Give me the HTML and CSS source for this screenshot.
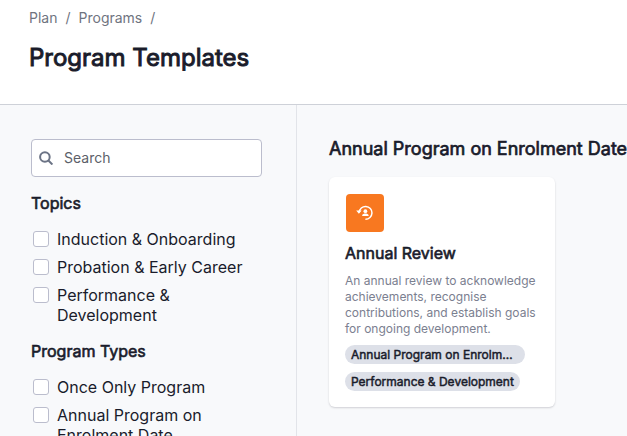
FILE: index.html
```html
<!DOCTYPE html>
<html lang="en">
<head>
<meta charset="utf-8">
<meta name="viewport" content="width=device-width, initial-scale=1">
<title>Program Templates</title>
<link rel="stylesheet" href="styles.css">
</head>
<body>
<header class="page-header">
  <nav class="breadcrumbs" aria-label="Breadcrumb">
    <a href="#">Plan</a><span>/</span><a href="#">Programs</a><span>/</span>
  </nav>
  <h1 class="page-title">Program Templates</h1>
</header>
<div class="layout">
  <aside class="sidebar">
    <label class="search">
      <svg class="search-icon" viewBox="0 0 14 14" aria-hidden="true"><circle cx="5.9" cy="6" r="4.8"/><path d="M9.4 9.5L13.4 13.5"/></svg>
      <input class="search-input" type="search" placeholder="Search" aria-label="Search">
    </label>
    <section class="filter">
      <h2 class="filter-title">Topics</h2>
      <label class="option"><input type="checkbox"><span>Induction &amp; Onboarding</span></label>
      <label class="option"><input type="checkbox"><span>Probation &amp; Early Career</span></label>
      <label class="option"><input type="checkbox"><span>Performance &amp; Development</span></label>
    </section>
    <section class="filter">
      <h2 class="filter-title">Program Types</h2>
      <label class="option"><input type="checkbox"><span>Once Only Program</span></label>
      <label class="option"><input type="checkbox"><span>Annual Program on Enrolment Date</span></label>
    </section>
  </aside>
  <main class="content">
    <h2 class="group-title">Annual Program on Enrolment Date</h2>
    <article class="card">
      <div class="card-icon">
        <svg viewBox="0 0 18 16" aria-hidden="true">
          <path class="arc" d="M3.2 7.4A6.4 6.4 0 1 1 9.4 14.2"/>
          <path d="M0.2 5.4h5.4L2.9 8.8z"/>
          <circle cx="9.4" cy="6.2" r="1.9"/>
          <path d="M6.2 11v-.6c0-1.3 2-1.9 3.2-1.9s3.2.6 3.2 1.9v.6z"/>
        </svg>
      </div>
      <h3 class="card-title">Annual Review</h3>
      <p class="card-text">An annual review to acknowledge achievements, recognise contributions, and establish goals for ongoing development.</p>
      <div class="tags">
        <span class="tag">Annual Program on Enrolment Date</span>
        <span class="tag">Performance &amp; Development</span>
      </div>
    </article>
  </main>
</div>
</body>
</html>
```
FILE: styles.css
```css
* {
  box-sizing: border-box;
}

body {
  margin: 0;
  height: 100vh;
  overflow: hidden;
  display: flex;
  flex-direction: column;
  background: #f8f9fb;
  color: #1a1c2b;
  font-family: Inter, "Liberation Sans", sans-serif;
  font-size: 16px;
  line-height: 20px;
}

h1, h2, h3, p {
  margin: 0;
}

h1, h2, h3, .tag {
  font-weight: 400;
  -webkit-text-stroke: 0.04em currentColor;
}

.page-header {
  flex: none;
  padding: 8px 29px 30px;
  background: #fff;
  border-bottom: 1px solid #ced1d8;
}

.breadcrumbs {
  display: flex;
  gap: 8px;
  font-size: 14px;
  color: #6f7480;
}

.breadcrumbs a {
  color: inherit;
  text-decoration: none;
}

.page-title {
  margin-top: 14px;
  font-size: 24px;
  line-height: 32px;
}

.layout {
  flex: 1;
  min-height: 0;
  display: flex;
}

.sidebar {
  flex: none;
  width: 297px;
  padding: 34px 34px 0 31px;
  border-right: 1px solid #e2e4e9;
}

.search {
  display: flex;
  align-items: center;
  gap: 11px;
  height: 38px;
  padding: 0 8px 0 7px;
  background: #fff;
  border: 1px solid #bbbdcd;
  border-radius: 4px;
}

.search-icon {
  flex: none;
  width: 14px;
  height: 14px;
  fill: none;
  stroke: #6b7385;
  stroke-width: 2;
}

.search-input {
  flex: 1;
  min-width: 0;
  padding: 0;
  border: 0;
  outline: 0;
  background: none;
  font: inherit;
  font-size: 14px;
}

.search-input::placeholder {
  color: #5c5f69;
}

.filter {
  margin-top: 16px;
}

.filter-title {
  margin-bottom: 16px;
  font-size: 16px;
  line-height: 20px;
}

.option {
  display: flex;
  align-items: flex-start;
  gap: 8px;
  margin-bottom: 8px;
  padding-left: 2px;
}

.option input {
  appearance: none;
  flex: none;
  width: 16px;
  height: 16px;
  margin: 2px 0;
  background: #fff;
  border: 1px solid #bbbdcd;
  border-radius: 3px;
}

.option input:checked {
  background: #f87820;
}

.content {
  flex: 1;
  min-width: 0;
  padding: 32px 0 0 32px;
}

.group-title {
  font-size: 18px;
  line-height: 24px;
  white-space: nowrap;
}

.card {
  width: 226px;
  margin-top: 16px;
  padding: 17px 16px 16px;
  background: #fff;
  border-radius: 6px;
  box-shadow: 0 1px 2px rgba(20, 24, 40, 0.18);
}

.card-icon {
  display: grid;
  place-items: center;
  width: 38px;
  height: 38px;
  margin-left: 1px;
  background: #f87820;
  border-radius: 4px;
}

.card-icon svg {
  width: 18px;
  height: 16px;
  fill: #fff;
}

.card-icon .arc {
  fill: none;
  stroke: #fff;
  stroke-width: 1.5;
}

.card-title {
  margin-top: 11px;
  font-size: 16px;
  line-height: 20px;
}

.card-text {
  margin-top: 10px;
  color: #7b8090;
  font-size: 12px;
  line-height: 16px;
}

.tags {
  display: flex;
  flex-direction: column;
  align-items: flex-start;
  gap: 8px;
  margin-top: 8px;
}

.tag {
  max-width: 180px;
  padding: 0 6px;
  overflow: hidden;
  text-overflow: ellipsis;
  white-space: nowrap;
  background: #dde0e8;
  border-radius: 10px;
  font-size: 12px;
  line-height: 19px;
}
```
